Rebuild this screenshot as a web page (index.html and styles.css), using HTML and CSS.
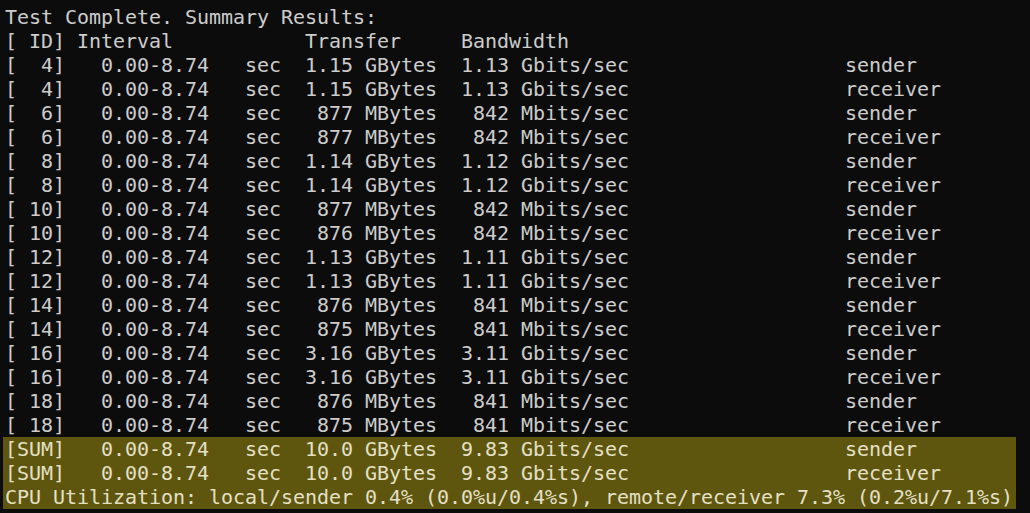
FILE: index.html
```html
<!DOCTYPE html>
<html>
<head>
<meta charset="utf-8">
<link rel="stylesheet" href="styles.css">
</head>
<body>
<div class="term">
<pre class="out">Test Complete. Summary Results:
[ ID] Interval           Transfer     Bandwidth
[  4]   0.00-8.74   sec  1.15 GBytes  1.13 Gbits/sec                  sender
[  4]   0.00-8.74   sec  1.15 GBytes  1.13 Gbits/sec                  receiver
[  6]   0.00-8.74   sec   877 MBytes   842 Mbits/sec                  sender
[  6]   0.00-8.74   sec   877 MBytes   842 Mbits/sec                  receiver
[  8]   0.00-8.74   sec  1.14 GBytes  1.12 Gbits/sec                  sender
[  8]   0.00-8.74   sec  1.14 GBytes  1.12 Gbits/sec                  receiver
[ 10]   0.00-8.74   sec   877 MBytes   842 Mbits/sec                  sender
[ 10]   0.00-8.74   sec   876 MBytes   842 Mbits/sec                  receiver
[ 12]   0.00-8.74   sec  1.13 GBytes  1.11 Gbits/sec                  sender
[ 12]   0.00-8.74   sec  1.13 GBytes  1.11 Gbits/sec                  receiver
[ 14]   0.00-8.74   sec   876 MBytes   841 Mbits/sec                  sender
[ 14]   0.00-8.74   sec   875 MBytes   841 Mbits/sec                  receiver
[ 16]   0.00-8.74   sec  3.16 GBytes  3.11 Gbits/sec                  sender
[ 16]   0.00-8.74   sec  3.16 GBytes  3.11 Gbits/sec                  receiver
[ 18]   0.00-8.74   sec   876 MBytes   841 Mbits/sec                  sender
[ 18]   0.00-8.74   sec   875 MBytes   841 Mbits/sec                  receiver</pre>
<pre class="out sel">[SUM]   0.00-8.74   sec  10.0 GBytes  9.83 Gbits/sec                  sender
[SUM]   0.00-8.74   sec  10.0 GBytes  9.83 Gbits/sec                  receiver
CPU Utilization: local/sender 0.4% (0.0%u/0.4%s), remote/receiver 7.3% (0.2%u/7.1%s)</pre>
</div>
</body>
</html>
```
FILE: styles.css
```css
html, body {
  margin: 0;
  padding: 0;
  background: #0c0c0c;
  width: 1030px;
  height: 513px;
  overflow: hidden;
}
.term {
  padding: 5px 0 0 5px;
  display: flex;
  flex-direction: column;
  align-items: flex-start;
}
.out {
  margin: 0;
  font-family: "DejaVu Sans Mono", "Liberation Mono", monospace;
  font-size: 20px;
  letter-spacing: -0.04px;
  line-height: 24px;
  color: #cccccc;
}
.sel {
  background: #5e560e;
  color: #e4e0c6;
  margin-left: -2px;
  padding: 0 3px 0 2px;
}
```
